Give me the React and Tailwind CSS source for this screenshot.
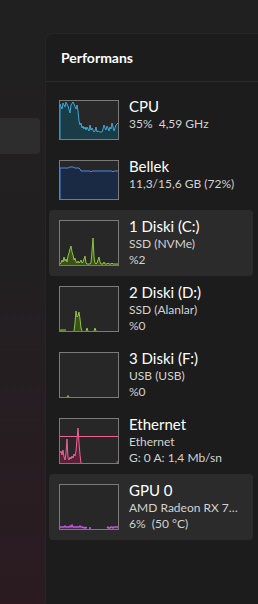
import React from "react";

const toPts = (arr) => arr.map(([x, y]) => `${x},${y}`).join(" ");

function Graph({ h, segs, line, fill, extraLines = [], sw = 1 }) {
  const W = 58;
  return (
    <div className="shrink-0 border border-[#7a7a7a] bg-[#272727]" style={{ width: 60, height: h + 2 }}>
      <svg width={W} height={h} viewBox={`0 0 ${W} ${h}`} className="block">
        {extraLines.map((y, i) => (
          <line key={"l" + i} x1="0" x2={W} y1={y} y2={y} stroke={line} strokeWidth="1" />
        ))}
        {segs.map((s, i) => {
          const poly = [[s[0][0], h], ...s, [s[s.length - 1][0], h]];
          return (
            <g key={i}>
              <polygon points={toPts(poly)} fill={fill} />
              <polyline points={toPts(s)} fill="none" stroke={line} strokeWidth={sw} strokeLinejoin="round" />
            </g>
          );
        })}
      </svg>
    </div>
  );
}

const fromHeights = (hs, h, x0 = 0) => hs.map((v, i) => [x0 + i, h - v]);

const cpu = [
  [0, 38], [0, 3], [2, 8], [3, 2], [5, 6], [6, 1], [8, 5], [10, 12], [11, 4], [13, 1], [14, 3], [16, 8], [17, 4], [18, 10],
  [19, 20], [20, 24], [21, 22], [22, 27], [23, 25], [24, 28], [25, 26], [26, 29], [27, 26], [28, 28], [29, 30], [30, 24],
  [31, 29], [32, 27], [33, 29], [34, 31], [35, 30], [36, 26], [37, 31], [38, 30], [40, 31], [42, 31], [43, 28], [44, 24],
  [45, 27], [46, 29], [47, 25], [48, 27], [49, 30], [50, 26], [51, 28], [52, 22], [53, 26], [54, 30], [56, 24], [58, 22],
];

const mem = [
  [0, 38], [0, 7], [8, 7], [10, 6], [13, 6], [15, 7], [19, 7], [20, 8], [21, 10], [30, 10], [31, 11], [32, 10], [52, 10], [53, 11], [54, 10], [58, 10],
];

const diskC = fromHeights(
  [1, 2, 5, 3, 8, 4, 6, 3, 9, 12, 16, 19, 13, 10, 5, 7, 3, 2, 4, 2, 3, 5, 2, 3, 6, 9, 2, 1, 1, 1, 1, 2, 14, 27, 8, 2, 1, 2, 5, 8, 3, 1, 1, 1, 3, 1, 1, 1, 2, 1, 1, 1, 2, 1, 1, 1, 1, 1, 1],
  44
);

const diskD = [
  [[0, 43], [6, 43]],
  fromHeights([0, 8, 20, 14, 15, 19, 12, 3, 0], 44, 14),
  fromHeights([0, 3, 0], 44, 26),
  fromHeights([0, 3, 0], 44, 34),
];

const diskF = [fromHeights([0, 1.5, 0], 44, 7)];

const eth = [
  fromHeights([10, 12, 8, 13, 6, 3, 10, 24, 5, 3, 6, 4, 7, 5, 9, 7, 12, 24, 35, 20, 8, 0], 44),
  [[56.5, 43], [58, 43]],
];

const gpu = [
  fromHeights([2, 2, 2, 2, 2, 3, 2, 2, 2, 2, 3, 2, 4, 2, 2, 2, 2, 2, 2, 2, 3, 2, 2, 1.5, 1.5, 1, 1.5, 1.5], 44),
  fromHeights([1, 1, 1], 44, 29),
  fromHeights([1, 2, 1, 1, 2, 2, 1, 2, 2, 2, 2, 2], 44, 47),
];

const COLORS = {
  cpu: ["#3fa7d6", "#1a3c47"],
  mem: ["#4a8ce8", "#1a2a44"],
  disk: ["#8cc63e", "#3b5118"],
  eth: ["#ee6394", "#5a2038"],
  gpu: ["#c35ad9", "#4b2457"],
};

function Row({ graph, title, lines, selected, tall }) {
  return (
    <div
      className={`flex w-full items-start gap-[10px] rounded-[4px] pl-[10px] pr-[14px] ${tall ? "h-[66px]" : "h-[60px]"} pt-[10px] ${
        selected ? "bg-[#2b2b2b]" : ""
      }`}
    >
      {graph}
      <div className="-mt-[4px] min-w-0 flex-1 overflow-hidden">
        <div className="text-[15px] leading-[20px] text-white">{title}</div>
        {lines.map((l, i) => (
          <div key={i} className="truncate text-[12px] leading-[16px] text-[#d2d2d2]">
            {l}
          </div>
        ))}
      </div>
    </div>
  );
}

export default function App() {
  return (
    <div
      className="flex h-[604px] w-[258px] overflow-hidden bg-gradient-to-b from-[#202020] via-[#231f21] to-[#2b1b21]"
      style={{ fontFamily: "Lato, 'Noto Sans', sans-serif" }}
    >
      <div className="w-[45px] shrink-0 pt-[118px]">
        <div className="h-[36px] w-[40px] rounded-r-[4px] bg-[#2d2d2d]" />
      </div>
      <div className="flex min-w-0 flex-1 flex-col pt-[33px]">
        <div className="min-w-0 flex-1 rounded-tl-[8px] border-l border-t border-[#252525] bg-[#1c1c1c]">
          <div className="px-[15px] pb-[13px] pt-[14px] text-[14px] font-bold leading-[20px] text-white">Performans</div>
          <div className="h-px bg-[#2c2c2c]" />
          <div className="flex flex-col pl-[3px] pr-[5px] pt-[8px]">
            <Row
              graph={<Graph h={38} segs={[cpu]} line={COLORS.cpu[0]} fill={COLORS.cpu[1]} />}
              title="CPU"
              lines={["35%\u00a0\u00a04,59 GHz"]}
            />
            <Row
              graph={<Graph h={38} segs={[mem]} line={COLORS.mem[0]} fill={COLORS.mem[1]} />}
              title="Bellek"
              lines={["11,3/15,6 GB (72%)"]}
            />
            <Row
              tall
              selected
              graph={<Graph h={44} segs={[diskC]} line={COLORS.disk[0]} fill={COLORS.disk[1]} />}
              title="1 Diski (C:)"
              lines={["SSD (NVMe)", "%2"]}
            />
            <Row
              tall
              graph={<Graph h={44} segs={diskD} line={COLORS.disk[0]} fill={COLORS.disk[1]} />}
              title="2 Diski (D:)"
              lines={["SSD (Alanlar)", "%0"]}
            />
            <Row
              tall
              graph={<Graph h={44} segs={diskF} line={COLORS.disk[0]} fill={COLORS.disk[1]} />}
              title="3 Diski (F:)"
              lines={["USB (USB)", "%0"]}
            />
            <Row
              tall
              graph={<Graph h={44} segs={eth} line={COLORS.eth[0]} fill={COLORS.eth[1]} extraLines={[17.5]} />}
              title="Ethernet"
              lines={["Ethernet", "G: 0 A: 1,4 Mb/sn"]}
            />
            <Row
              tall
              selected
              graph={<Graph h={44} segs={gpu} line={COLORS.gpu[0]} fill={COLORS.gpu[1]} sw={1.5} />}
              title="GPU 0"
              lines={["AMD Radeon RX 7900 XTX", "6%\u00a0\u00a0(50 °C)"]}
            />
          </div>
        </div>
      </div>
    </div>
  );
}
